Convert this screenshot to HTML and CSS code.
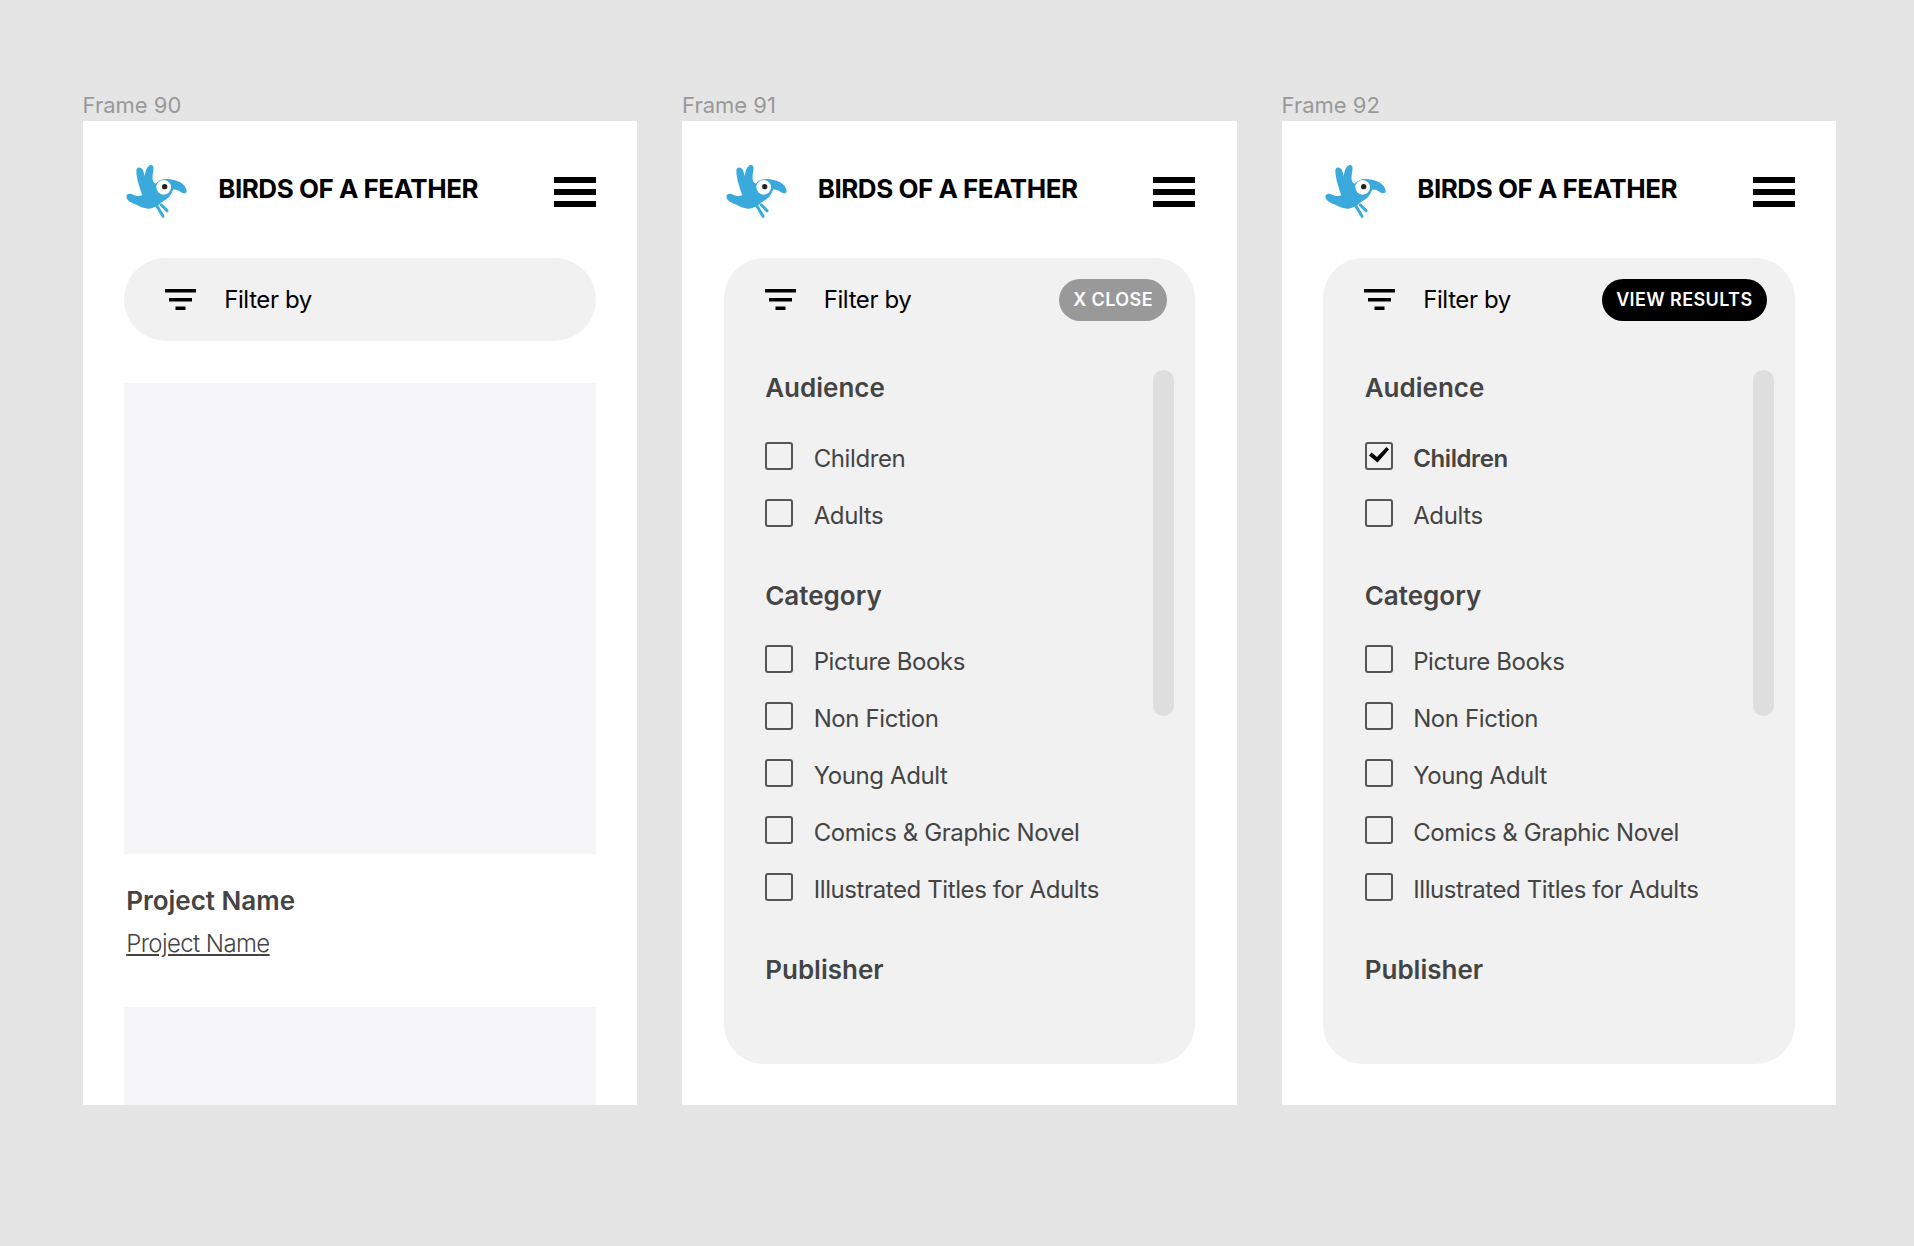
FILE: index.html
```html
<!DOCTYPE html>
<html lang="en">
<head>
    <meta charset="UTF-8">
    <title>Birds of a Feather - Filter frames</title>
    <link rel="stylesheet" href="styles.css">
</head>
<body>
    <svg class="defs" width="0" height="0">
        <symbol id="bird" viewBox="36 25 186 165">
            <path fill="#3aa9dc" d="M40 122C42 112 52 112 62 118C72 122 82 122 88 118C82 100 70 70 70 45C70 33 85 32 90 44L96 62C96 45 104 26 116 28C124 30 122 42 120 52C117 68 118 80 128 84C135 75 148 68 165 70C195 72 218 85 221 105C221 114 212 114 204 110C198 105 190 101 180 102C175 118 165 130 150 137C135 150 120 160 105 159C90 157 80 152 70 147C55 142 40 135 40 122Z"/>
            <path fill="none" stroke="#3aa9dc" stroke-width="9" stroke-linecap="round" d="M130 148L150 182M145 148L162 165"/>
            <circle cx="152" cy="95" r="22" fill="#fff"/>
            <circle cx="155" cy="93" r="8" fill="#222"/>
        </symbol>
        <symbol id="filter" viewBox="0 0 31 21">
            <path fill="#000" d="M0 0h31v3.4H0zM4 9h23v3.4H4zM10.500 17.600h10v3.400h-10z"/>
        </symbol>
    </svg>

    <div class="stage">
        <!-- closed -->
        <div class="frame-col">
            <div class="frame-label">Frame 90</div>
            <div class="frame">
                <div class="site-header">
                    <svg class="logo"><use href="#bird"/></svg>
                    <span class="brand">BIRDS OF A FEATHER</span>
                    <div class="burger"><i></i><i></i><i></i></div>
                </div>
                <div class="filter filter-closed">
                    <div class="filter-bar">
                        <svg class="filter-icon"><use href="#filter"/></svg>
                        <span class="filter-title">Filter by</span>
                    </div>
                </div>
                <div class="thumb"></div>
                <h3 class="project-title">Project Name</h3>
                <a class="project-link">Project Name</a>
                <div class="thumb thumb-next"></div>
            </div>
        </div>

        <!-- open -->
        <div class="frame-col">
            <div class="frame-label">Frame 91</div>
            <div class="frame">
                <div class="site-header">
                    <svg class="logo"><use href="#bird"/></svg>
                    <span class="brand">BIRDS OF A FEATHER</span>
                    <div class="burger"><i></i><i></i><i></i></div>
                </div>
                <div class="filter">
                    <div class="filter-bar">
                        <svg class="filter-icon"><use href="#filter"/></svg>
                        <span class="filter-title">Filter by</span>
                        <button class="pill pill-close">X CLOSE</button>
                    </div>
                    <div class="filter-body">
                        <div class="filter-groups">
                            <h4 class="group-title">Audience</h4>
                            <div class="check-row"><span class="box"></span>Children</div>
                            <div class="check-row"><span class="box"></span>Adults</div>
                            <h4 class="group-title group-next">Category</h4>
                            <div class="check-row"><span class="box"></span>Picture Books</div>
                            <div class="check-row"><span class="box"></span>Non Fiction</div>
                            <div class="check-row"><span class="box"></span>Young Adult</div>
                            <div class="check-row"><span class="box"></span>Comics &amp; Graphic Novel</div>
                            <div class="check-row"><span class="box"></span>Illustrated Titles for Adults</div>
                            <h4 class="group-title group-next">Publisher</h4>
                        </div>
                        <div class="scrollbar"></div>
                    </div>
                </div>
            </div>
        </div>

        <!-- open, one option ticked -->
        <div class="frame-col">
            <div class="frame-label">Frame 92</div>
            <div class="frame">
                <div class="site-header">
                    <svg class="logo"><use href="#bird"/></svg>
                    <span class="brand">BIRDS OF A FEATHER</span>
                    <div class="burger"><i></i><i></i><i></i></div>
                </div>
                <div class="filter">
                    <div class="filter-bar">
                        <svg class="filter-icon"><use href="#filter"/></svg>
                        <span class="filter-title">Filter by</span>
                        <button class="pill pill-results">VIEW RESULTS</button>
                    </div>
                    <div class="filter-body">
                        <div class="filter-groups">
                            <h4 class="group-title">Audience</h4>
                            <div class="check-row is-checked">
                                <span class="box"><svg viewBox="0 0 24 24"><path fill="#000" d="M2 11.500L4.500 8.500L10 13L19.500 3L22 5.500L10.500 18.500Z"/></svg></span>Children
                            </div>
                            <div class="check-row"><span class="box"></span>Adults</div>
                            <h4 class="group-title group-next">Category</h4>
                            <div class="check-row"><span class="box"></span>Picture Books</div>
                            <div class="check-row"><span class="box"></span>Non Fiction</div>
                            <div class="check-row"><span class="box"></span>Young Adult</div>
                            <div class="check-row"><span class="box"></span>Comics &amp; Graphic Novel</div>
                            <div class="check-row"><span class="box"></span>Illustrated Titles for Adults</div>
                            <h4 class="group-title group-next">Publisher</h4>
                        </div>
                        <div class="scrollbar"></div>
                    </div>
                </div>
            </div>
        </div>
    </div>
</body>
</html>
```

FILE: styles.css
```css
* {
    box-sizing: border-box;
}
body {
    margin: 0;
    height: 1246px;
    overflow: hidden;
    background-color: #e5e5e5;
    font-family: Inter, "Noto Sans", sans-serif;
}
.defs {
    display: block;
}
.stage {
    display: flex;
    gap: 45px;
    padding: 91px 0 0 82.6px;
}
.frame-col {
    width: 554.5px;
}
.frame-label {
    height: 30px;
    font-size: 22px;
    line-height: 28px;
    color: #999;
}
.frame {
    height: 984px;
    overflow: hidden;
    background-color: #fff;
    padding: 0 41.6px;
}
.site-header {
    display: flex;
    align-items: flex-start;
    height: 137px;
    padding-top: 43px;
}
.logo {
    width: 62px;
    height: 55px;
    margin-left: 1px;
}
.brand {
    margin-left: 31px;
    font-size: 26px;
    line-height: 32px;
    font-weight: 700;
    letter-spacing: -0.47px;
    color: #000;
    margin-top: 9px;
    white-space: nowrap;
}
.burger {
    display: flex;
    flex-direction: column;
    gap: 6px;
    margin: 13px 0 0 auto;
    width: 42px;
}
.burger i {
    display: block;
    height: 6px;
    background-color: #000;
}
.filter {
    height: 806px;
    background-color: #f1f1f1;
    border-radius: 40px;
}
.filter-closed {
    height: 83px;
    border-radius: 42px;
}
.filter-bar {
    display: flex;
    align-items: center;
    height: 83px;
    padding: 0 28px 0 41px;
}
.filter-icon {
    width: 31px;
    height: 21px;
}
.filter-title {
    margin-left: 28px;
    font-size: 24px;
    letter-spacing: -0.4px;
    color: #000;
}
.pill {
    margin-left: auto;
    height: 42px;
    border: none;
    border-radius: 21px;
    padding: 0 14px;
    font-family: inherit;
    font-size: 18px;
    font-weight: 600;
    letter-spacing: 0.4px;
    color: #fff;
}
.pill-close {
    background-color: #999;
}
.pill-results {
    background-color: #000;
}
.filter-body {
    display: flex;
    justify-content: space-between;
    padding: 29px 21px 0 41.500px;
}
.filter-groups {
    flex: 1;
}
.group-title {
    margin: 0 0 38px;
    font-size: 26px;
    line-height: 36px;
    font-weight: 600;
    color: #444;
}
.group-next {
    margin-top: 49px;
    margin-bottom: 33px;
}
.check-row {
    display: flex;
    align-items: center;
    height: 28px;
    margin-bottom: 29px;
    font-size: 24px;
    letter-spacing: -0.4px;
    color: #444;
}
.is-checked {
    font-weight: 600;
}
.box {
    width: 28px;
    height: 28px;
    margin-right: 20.500px;
    margin-bottom: 4px;
    border: 2px solid #555;
    border-radius: 3px;
}
.box svg {
    display: block;
    width: 24px;
    height: 24px;
}
.scrollbar {
    width: 21px;
    height: 346px;
    border-radius: 10px;
    background-color: #dedede;
}
.thumb {
    height: 471px;
    margin-top: 42px;
    background-color: #f6f5f7;
}
.thumb-next {
    margin-top: 47px;
}
.project-title {
    margin: 29px 0 0 2px;
    font-size: 26px;
    line-height: 36px;
    font-weight: 600;
    color: #444;
}
.project-link {
    display: block;
    margin: 9px 0 0 2px;
    font-size: 24px;
    line-height: 32px;
    font-weight: 300;
    letter-spacing: -0.6px;
    color: #444;
    text-decoration: underline;
}
```
